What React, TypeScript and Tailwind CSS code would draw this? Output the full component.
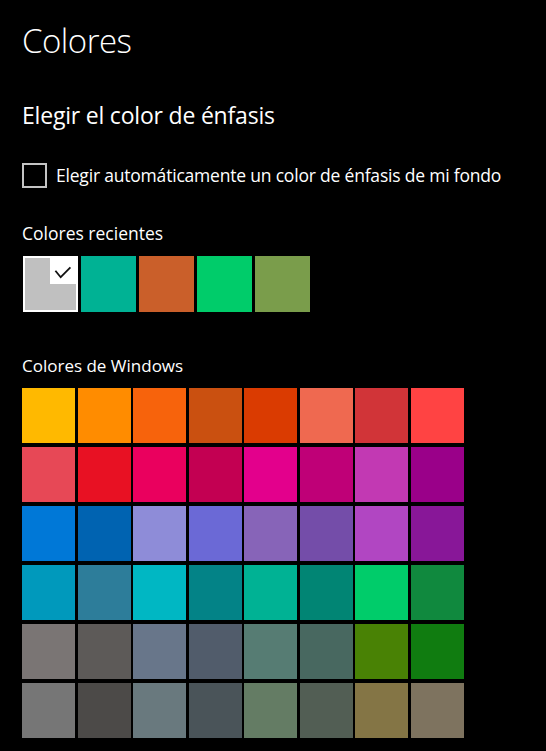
const windowsColors = [
  ["#FFB900", "#FF8C00", "#F7630C", "#CA5010", "#DA3B01", "#EF6950", "#D13438", "#FF4343"],
  ["#E74856", "#E81123", "#EA005E", "#C30052", "#E3008C", "#BF0077", "#C239B3", "#9A0089"],
  ["#0078D7", "#0063B1", "#8E8CD8", "#6B69D6", "#8764B8", "#744DA9", "#B146C2", "#881798"],
  ["#0099BC", "#2D7D9A", "#00B7C3", "#038387", "#00B294", "#018574", "#00CC6A", "#10893E"],
  ["#7A7574", "#5D5A58", "#68768A", "#515C6B", "#567C73", "#486860", "#498205", "#107C10"],
  ["#767676", "#4C4A48", "#69797E", "#4A5459", "#647C64", "#525E54", "#847545", "#7E735F"],
];

const recentColors = ["#00B294", "#CA5F2A", "#00CC6A", "#7A9D4B"];

export default function App() {
  return (
    <div className="w-[546px] h-[751px] overflow-hidden bg-black text-white pl-[22px] pt-[24px] font-['Open_Sans','Noto_Sans',sans-serif]">
      {/* Page title */}
      <h1 className="text-[33px] font-light leading-none tracking-[-0.5px]">Colores</h1>

      <h2 className="mt-[47px] text-[23px] leading-none tracking-[-0.2px]">Elegir el color de énfasis</h2>

      {/* Auto accent checkbox */}
      <label className="mt-[36px] flex items-center gap-[9px]">
        <span className="w-[25px] h-[25px] border-2 border-[#c4c4c4] shrink-0" />
        <span className="text-[17.5px] leading-none tracking-[-0.2px]">
          Elegir automáticamente un color de énfasis de mi fondo
        </span>
      </label>

      {/* Recent colors */}
      <div className="mt-[37px] text-[17.5px] leading-none">Colores recientes</div>
      <div className="mt-[13px] ml-px flex gap-[3px]">
        <div className="relative w-[55px] h-[56px] border-2 border-white bg-[#c0c0c0]">
          <div className="absolute top-0 right-0 w-[26px] h-[26px] bg-white">
            <svg viewBox="0 0 26 26" className="w-[26px] h-[26px]">
              <polyline
                points="5.4,12.7 10.7,19.2 20.4,9.4"
                fill="none"
                stroke="#111"
                strokeWidth="1.8"
              />
            </svg>
          </div>
        </div>
        {recentColors.map((c) => (
          <div key={c} className="w-[55px] h-[56px]" style={{ backgroundColor: c }} />
        ))}
      </div>

      {/* Windows colors */}
      <div className="mt-[45px] text-[17px] leading-none">Colores de Windows</div>
      <div className="mt-[14px] grid grid-cols-[repeat(8,53px)] gap-x-[2.5px] gap-y-[4px]">
        {windowsColors.flat().map((c, i) => (
          <div key={i} className="h-[55px]" style={{ backgroundColor: c }} />
        ))}
      </div>
    </div>
  );
}
